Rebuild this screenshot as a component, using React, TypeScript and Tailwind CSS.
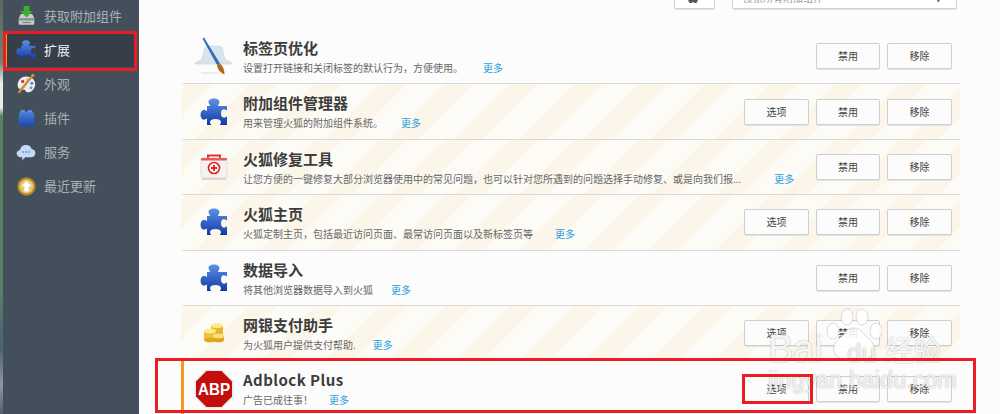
import type { ReactNode } from "react";

const PUZZLE =
  "M10 8c0-1.500-1.500-2.200-1.500-4C8.500 1.800 11 .5 14 .5s5.500 1.300 5.500 3.500c0 1.800-1.500 2.500-1.500 4h9v4.500c-1 0-1.500-1.200-3-1.200-2 0-3 2-3 4.200s1 4.200 3 4.200c1.500 0 2-1.200 3-1.200V27h-7c0-1 1-1.500 1-3 0-2-2.500-3-5.500-3s-5.500 1-5.500 3c0 1.500 1 2 1 3H7v-6.500c-1 0-1.500 1.200-3 1.200-2 0-3.500-2.200-3.500-5s1.500-5 3.500-5c1.500 0 2 1.200 3 1.200V8z";

function PuzzleIcon({ id, size = 28 }: { id: string; size?: number }) {
  return (
    <svg width={size} height={size} viewBox="0 0 28 28">
      <defs>
        <linearGradient id={id} x1="0" y1="0" x2="0" y2="1">
          <stop offset="0" stopColor="#5b93e8" />
          <stop offset="1" stopColor="#1438a8" />
        </linearGradient>
      </defs>
      <path d={PUZZLE} fill={`url(#${id})`} />
    </svg>
  );
}

function BrushIcon() {
  return (
    <svg width="42" height="40" viewBox="0 0 42 40">
      <path d="M2 28c0-2 2-2.500 4-3 3-1 3.500-3 4.500-8 .8-4 1.500-7 4.500-7h11c3 0 3.700 3 4.500 7 1 5 1.500 7 4.500 8 2 .5 4 1 4 3z" fill="#d9e3ec" stroke="#c8d4df" strokeWidth="0.6" />
      <path d="M11 1.500 9.500 2.500 24 29l3-1.500z" fill="#2f6fb5" />
      <path d="M24 29l3-1.500c3 2.500 4.500 6.500 4.500 11-4-1.500-7-5-7.500-9.500z" fill="#b5651d" />
      <rect x="8" y="36" width="18" height="2" fill="#ececec" />
    </svg>
  );
}

function AidIcon() {
  return (
    <svg width="28" height="28" viewBox="0 0 28 28">
      <path d="M8 6V2.500h12V6" fill="none" stroke="#e03030" strokeWidth="2" />
      <rect x="1" y="5" width="26" height="20" rx="2" fill="#f4f1ee" stroke="#d5d2ce" strokeWidth="0.6" />
      <rect x="1" y="5" width="26" height="2.500" rx="1.200" fill="#e85a56" />
      <circle cx="14" cy="15" r="5.500" fill="#fff" stroke="#d22" strokeWidth="1.600" />
      <path d="M14 12v6M11 15h6" stroke="#d22" strokeWidth="1.800" />
      <rect x="2" y="25" width="24" height="2" fill="#d8d8d8" />
    </svg>
  );
}

function CoinsIcon() {
  return (
    <svg width="22" height="20" viewBox="0 0 22 20">
      <rect x="8" y="2.500" width="12" height="10" fill="#eebc30" />
      <ellipse cx="14" cy="2.700" rx="6" ry="2.500" fill="#fde88a" />
      <path d="M8 6h12M8 9h12" stroke="#c99a1e" strokeWidth="0.5" />
      <rect x="1" y="8" width="12" height="9" fill="#f0c23c" />
      <ellipse cx="7" cy="17" rx="6" ry="2.500" fill="#e0a820" />
      <ellipse cx="7" cy="8" rx="6" ry="2.500" fill="#fdeb90" />
      <rect x="10" y="13" width="11" height="4" fill="#e9b42a" />
      <ellipse cx="15.500" cy="17" rx="5.500" ry="2.300" fill="#dca41e" />
      <ellipse cx="15.500" cy="13" rx="5.500" ry="2.300" fill="#fbe27a" />
    </svg>
  );
}

function AbpIcon() {
  return (
    <svg width="40" height="40" viewBox="0 0 40 40">
      <path d="M12 .5h16L39.500 12v16L28 39.500H12L.5 28V12z" fill="#e8e8e8" />
      <path d="M12.500 2h15L38 12.500v15L27.500 38h-15L2 27.500v-15z" fill="#c40d0d" />
      <text x="4" y="26" textLength="32" lengthAdjust="spacingAndGlyphs" fontSize="17" fontWeight="700" fill="#fff" fontFamily="'Liberation Sans', sans-serif">
        ABP
      </text>
    </svg>
  );
}

function TrayIcon() {
  return (
    <svg width="17" height="20" viewBox="0 0 24 28">
      <path d="M4 11h16l3 6v8a1.500 1.500 0 0 1-1.500 1.500h-19A1.500 1.500 0 0 1 1 25v-8z" fill="#c9ccc8" />
      <path d="M1 17h22v3.500H1z" fill="#8b9094" />
      <path d="M6 22.500h12V24H6z" fill="#777c80" />
      <path d="M8 0h8v7h5l-9 9-9-9h5z" fill="#3fae2e" />
    </svg>
  );
}

function PaletteIcon() {
  return (
    <svg width="20" height="20" viewBox="0 0 24 24">
      <path d="M12 3c6 0 11 3.500 11 9s-4 10-9 10c-3 0-2-3-4-3-3 0-8 0-8-6 0-6 5-10 10-10z" fill="#eceff0" />
      <circle cx="8" cy="9" r="2" fill="#d83a2c" />
      <circle cx="14" cy="7" r="1.800" fill="#f0b429" />
      <circle cx="19" cy="11" r="1.800" fill="#3f86d8" />
      <circle cx="18" cy="16.500" r="1.800" fill="#8a8f96" />
      <path d="M20 0 22 1.500 7 20l-2.500 3L2 23l1-3z" fill="#c98a3c" />
      <path d="M18.500 0h3l1 2-3 2z" fill="#ef8a1d" />
    </svg>
  );
}

function BlockIcon() {
  return (
    <svg width="17" height="17" viewBox="0 0 22 22">
      <defs>
        <linearGradient id="block" x1="0" y1="0" x2="0" y2="1">
          <stop offset="0" stopColor="#4a7fdc" />
          <stop offset="1" stopColor="#1d47ad" />
        </linearGradient>
      </defs>
      <rect x="3" y="0" width="6.500" height="5" rx="2" fill="#5d8fe6" />
      <rect x="12" y="0" width="6.500" height="5" rx="2" fill="#5d8fe6" />
      <rect x="1" y="3" width="20" height="18" rx="2.500" fill="url(#block)" />
    </svg>
  );
}

function CloudIcon() {
  return (
    <svg width="20" height="18" viewBox="0 0 26 24">
      <path d="M7 19c-4 0-6.500-2-6.500-5 0-2.500 2-4.500 4.500-4.800C5.500 5 9 2.500 13 2.500s6.500 2 7.500 5.500c3 .3 5 2.500 5 5.500S23 19 19.500 19H12l-4 4v-4z" fill="#c3daf7" />
      <circle cx="9" cy="12" r="1.100" fill="#3f6fb8" />
      <circle cx="13" cy="12" r="1.100" fill="#3f6fb8" />
      <circle cx="17" cy="12" r="1.100" fill="#3f6fb8" />
    </svg>
  );
}

function BadgeIcon() {
  return (
    <svg width="19" height="19" viewBox="0 0 26 26">
      <circle cx="13" cy="13" r="12.500" fill="#b98a1e" />
      <circle cx="13" cy="13" r="9.500" fill="#e5c878" />
      <path d="M13 5l7 7.500h-4V20h-6v-7.500H6z" fill="#fff" />
    </svg>
  );
}

const NAV: { label: string; icon: ReactNode; active?: boolean }[] = [
  { label: "获取附加组件", icon: <TrayIcon /> },
  { label: "扩展", icon: <PuzzleIcon id="nav-puzzle" size={20} />, active: true },
  { label: "外观", icon: <PaletteIcon /> },
  { label: "插件", icon: <BlockIcon /> },
  { label: "服务", icon: <CloudIcon /> },
  { label: "最近更新", icon: <BadgeIcon /> },
];

type Addon = {
  name: string;
  desc: string;
  icon: ReactNode;
  moreClass: string;
  options?: boolean;
  striped?: boolean;
  nameClass?: string;
};

const ADDONS: Addon[] = [
  { name: "标签页优化", desc: "设置打开链接和关闭标签的默认行为，方便使用。", icon: <BrushIcon />, moreClass: "ml-[20px]" },
  { name: "附加组件管理器", desc: "用来管理火狐的附加组件系统。", icon: <PuzzleIcon id="p1" />, moreClass: "ml-[18px]", options: true, striped: true },
  { name: "火狐修复工具", desc: "让您方便的一键修复大部分浏览器使用中的常见问题，也可以针对您所遇到的问题选择手动修复、或是向我们报...", icon: <AidIcon />, moreClass: "ml-[33px]", striped: true },
  { name: "火狐主页", desc: "火狐定制主页，包括最近访问页面、最常访问页面以及新标签页等", icon: <PuzzleIcon id="p2" />, moreClass: "ml-[22px]", options: true, striped: true },
  { name: "数据导入", desc: "将其他浏览器数据导入到火狐", icon: <PuzzleIcon id="p3" />, moreClass: "ml-[18px]" },
  { name: "网银支付助手", desc: "为火狐用户提供支付帮助.", icon: <CoinsIcon />, moreClass: "ml-[17px]", options: true, striped: true },
  { name: "Adblock Plus", desc: "广告已成往事！", icon: <AbpIcon />, moreClass: "ml-[16px]", options: true, nameClass: "tracking-[0.45px]" },
];

function Btn({ children, className = "" }: { children: ReactNode; className?: string }) {
  return (
    <button className={`flex h-[26px] items-center justify-center rounded-[2px] border border-[#cfcfcf] bg-[#fcfcfc] text-[10px] leading-none text-[#444] shadow-[0_1px_0_#e4e4e4] ${className}`}>
      {children}
    </button>
  );
}

function AddonRow({ addon, last }: { addon: Addon; last: boolean }) {
  const bg = addon.striped
    ? "bg-[repeating-linear-gradient(135deg,#fbf6e9_0px,#fbf6e9_20px,#fdfbf6_20px,#fdfbf6_46px)]"
    : "bg-[#fcfcfc]";
  const edge = last ? "h-[56px] border-l-[#f7981d]" : "h-[55.4px] border-b border-b-[#d9d9d6] border-l-transparent";
  return (
    <div className={`flex items-center border-l-[3px] pr-2 ${bg} ${edge}`}>
      <div className="flex w-[59px] shrink-0 justify-center">{addon.icon}</div>
      <div className="min-w-0 flex-1 self-start pt-[9px]">
        <div className={`h-[20px] text-[15px] leading-[20px] font-bold text-[#3c3c3c] ${addon.nameClass ?? ""}`}>{addon.name}</div>
        <div className="mt-[3px] flex h-[14px] items-center text-[10px] leading-[14px] whitespace-nowrap text-[#666]">
          <span>{addon.desc}</span>
          <span className={`text-[#2b9fe2] ${addon.moreClass}`}>更多</span>
        </div>
      </div>
      <div className="flex shrink-0 gap-[7px]">
        {addon.options && <Btn className="w-[65px]">选项</Btn>}
        <Btn className="w-[64px]">禁用</Btn>
        <Btn className="w-[65px]">移除</Btn>
      </div>
    </div>
  );
}

function Watermark() {
  return (
    <div className="pointer-events-none absolute top-[304px] left-[764px] h-[90px] w-[190px] font-['Liberation_Sans',sans-serif] text-white/90 [text-shadow:0_0_1.5px_rgba(100,100,100,0.6)]">
      <svg className="absolute top-[2px] left-[60px]" width="58" height="58" viewBox="0 0 58 58" fill="#fff" fillOpacity="0.88" stroke="#888" strokeOpacity="0.45" strokeWidth="0.7">
        <ellipse cx="23" cy="11" rx="6" ry="8" />
        <ellipse cx="38" cy="11" rx="6" ry="8" />
        <ellipse cx="9" cy="25" rx="6" ry="8" />
        <ellipse cx="52" cy="25" rx="6" ry="8" />
        <path d="M30 22c7 0 9 6 14 10 5 4 7 8 6 13-1 6-7 9-13 8-3-.5-5-1-7-1s-4 .5-7 1c-6 1-12-2-13-8-1-5 1-9 6-13 5-4 7-10 14-10z" />
      </svg>
      <span className="absolute top-[23px] left-[4px] text-[38px] leading-[44px]">Bai</span>
      <span className="absolute top-[34px] left-[83px] text-[26px] leading-[30px] text-[#efefef]">du</span>
      <span className="absolute top-[25px] left-[121px] font-['Noto_Sans_CJK_SC',sans-serif] text-[28px] leading-[40px]">经验</span>
      <span className="absolute top-[64px] left-[4px] text-[23px] leading-[24px] tracking-[0.2px] text-white/80">jingyan.baidu.com</span>
    </div>
  );
}

export default function App() {
  return (
    <div className="relative flex h-[414px] w-[1000px] overflow-hidden bg-[#fcfcfc] font-['Noto_Sans_CJK_SC',sans-serif]">
      {/* left edge of the window behind */}
      <div className="w-[3px] shrink-0 bg-[linear-gradient(180deg,#5a655f_0%,#6d8572_15%,#e9ece8_20%,#e9ece8_26%,#5c8065_28%,#5c7f68_70%,#4c6170_84%,#8c98a2_93%,#4f5f6b_100%)]" />

      {/* SIDEBAR */}
      <aside className="w-[136px] shrink-0 bg-[#434f5b]">
        <ul className="-mt-px">
          {NAV.map((item) => (
            <li
              key={item.label}
              className={
                item.active
                  ? "mr-[4px] ml-[2px] flex h-[34px] items-center gap-[4px] border-l-[2px] border-l-[#f7981d] bg-[#363f49] pl-[5px] text-[13px] text-[#f1f3f4]"
                  : "flex h-[34px] items-center gap-[4px] pl-[9px] text-[13px] text-[#aab1b8]"
              }
            >
              <span className="flex w-[28px] shrink-0 justify-center">{item.icon}</span>
              {item.label}
            </li>
          ))}
        </ul>
      </aside>

      {/* MAIN */}
      <main className="ml-[42px] w-[779px] shrink-0">
        <div className="flex h-[29px] items-start justify-end gap-[17px] pr-[3px]">
          <div className="flex h-[9px] w-[41px] items-start justify-center overflow-hidden rounded-b-[2px] border border-t-0 border-[#cfcfcf] bg-white shadow-[0_1px_0_#e4e4e4]">
            <svg width="10" height="4" viewBox="0 0 10 4" className="mr-[3px] shrink-0">
              <path d="M0 0h10L8.500 3h-2l-1.500-1-1.500 1h-2z" fill="#555" />
            </svg>
          </div>
          <div className="flex h-[9px] w-[225px] items-end justify-between overflow-hidden rounded-b-[2px] border border-t-0 border-[#cfcfcf] bg-white pr-[16px] pl-[10px] text-[10px] leading-[14px] text-[#999] shadow-[0_1px_0_#e4e4e4]">
            <span className="mb-[3px]">搜索所有附加组件</span>
            <span className="mb-[6px] h-[5px] w-[2px] rotate-[30deg] bg-[#3b6fb0]" />
          </div>
        </div>
        <div>
          {ADDONS.map((addon, i) => (
            <AddonRow key={addon.name} addon={addon} last={i === ADDONS.length - 1} />
          ))}
        </div>
      </main>

      <Watermark />

      {/* red annotation boxes */}
      <div className="pointer-events-none absolute top-[31px] left-[3px] h-[40px] w-[134px] border-[3px] border-[#ea1c24]" />
      <div className="pointer-events-none absolute top-[358px] left-[155px] h-[55px] w-[821px] border-[3px] border-[#ea1c24]" />
      <div className="pointer-events-none absolute top-[374px] left-[742px] h-[30px] w-[71px] border-[3px] border-[#ea1c24]" />
    </div>
  );
}
